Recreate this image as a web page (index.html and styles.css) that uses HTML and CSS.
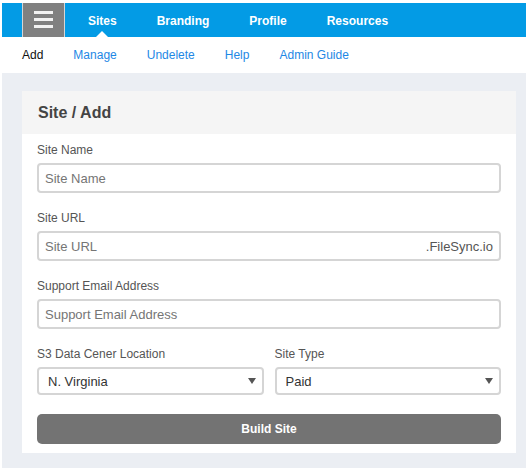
FILE: index.html
```html
<!DOCTYPE html>
<html>
<head>
<meta charset="utf-8">
<link rel="stylesheet" href="styles.css">
</head>
<body>
<div class="app">
  <nav class="topnav">
    <div class="menu-btn">
      <svg width="19" height="17" viewBox="0 0 19 17"><rect x="0" y="0" width="19" height="3" fill="#f2f2f2"/><rect x="0" y="7" width="19" height="3" fill="#f2f2f2"/><rect x="0" y="14" width="19" height="3" fill="#f2f2f2"/></svg>
    </div>
    <div class="nav-items">
      <a class="nav-item active">Sites</a>
      <a class="nav-item">Branding</a>
      <a class="nav-item">Profile</a>
      <a class="nav-item">Resources</a>
    </div>
  </nav>
  <div class="subnav">
    <a class="sub-item current">Add</a>
    <a class="sub-item">Manage</a>
    <a class="sub-item">Undelete</a>
    <a class="sub-item">Help</a>
    <a class="sub-item">Admin Guide</a>
  </div>
  <main class="main">
    <section class="card">
      <header class="card-header">Site / Add</header>
      <div class="card-body">
        <div class="field">
          <label class="label">Site Name</label>
          <input class="input" type="text" placeholder="Site Name">
        </div>
        <div class="field">
          <label class="label">Site URL</label>
          <div class="input-group">
            <input class="input-inner" type="text" placeholder="Site URL">
            <span class="suffix">.FileSync.io</span>
          </div>
        </div>
        <div class="field">
          <label class="label">Support Email Address</label>
          <input class="input" type="text" placeholder="Support Email Address">
        </div>
        <div class="row">
          <div class="col">
            <label class="label">S3 Data Cener Location</label>
            <div class="select-wrap">
              <select class="select"><option>N. Virginia</option></select>
              <span class="arrow"></span>
            </div>
          </div>
          <div class="col">
            <label class="label">Site Type</label>
            <div class="select-wrap">
              <select class="select"><option>Paid</option></select>
              <span class="arrow"></span>
            </div>
          </div>
        </div>
        <button class="btn">Build Site</button>
      </div>
    </section>
  </main>
</div>
</body>
</html>
```
FILE: styles.css
```css
* { box-sizing: border-box; }
html, body { background: #fff; }
body {
  margin: 3px 2px 2px 2px;
  font-family: "Liberation Sans", Arial, sans-serif;
}
.app { display: flex; flex-direction: column; height: 465px; }
.topnav {
  display: flex;
  height: 34px;
  background: #039be5;
  padding-left: 20px;
}
.menu-btn {
  width: 43px;
  background: #808080;
  border-left: 1px solid #d6d6d6;
  border-right: 1px solid #d6d6d6;
  display: flex;
  align-items: center;
  justify-content: center;
}
.menu-btn svg { display: block; margin-top: -1px; }
.nav-items { display: flex; margin-left: 3px; }
.nav-item {
  position: relative;
  padding: 1px 20px 0;
  line-height: 34px;
  height: 34px;
  font-size: 12px;
  font-weight: bold;
  color: #fff;
}
.nav-item.active::after {
  content: "";
  position: absolute;
  left: 50%;
  bottom: 0;
  margin-left: -6px;
  border-left: 6px solid transparent;
  border-right: 6px solid transparent;
  border-bottom: 6px solid #fff;
}
.subnav {
  display: flex;
  align-items: center;
  gap: 30px;
  height: 36px;
  padding-left: 20px;
  font-size: 12px;
}
.sub-item { color: #1e88e5; }
.sub-item.current { color: #111; }
.main {
  flex: 1;
  background: #ebeef3;
  padding: 18px 10px 15px 20px;
}
.card { background: #fff; }
.card-header {
  height: 43px;
  display: flex;
  align-items: center;
  padding: 0 16px;
  background: #f5f5f5;
  font-size: 16px;
  font-weight: bold;
  color: #444;
}
.card-body { padding: 8px 15px 9px; }
.field { margin-bottom: 17px; }
.label {
  display: block;
  font-size: 12px;
  line-height: 17px;
  margin-bottom: 4px;
  color: #555;
}
.input, .input-group {
  display: block;
  width: 100%;
  height: 30px;
  border: 2px solid #d5d5d5;
  border-radius: 4px;
  font: 13px "Liberation Sans", Arial, sans-serif;
  color: #333;
  background: #fff;
}
.input { padding: 0 6px; outline: none; }
.input-group { display: flex; align-items: center; }
.input-inner {
  flex: 1;
  min-width: 0;
  height: 100%;
  border: 0;
  outline: none;
  padding: 0 6px;
  background: transparent;
  font: 13px "Liberation Sans", Arial, sans-serif;
}
.suffix { padding-right: 6px; color: #555; font-size: 13px; }
::placeholder { color: #757575; opacity: 1; }
.row { display: flex; gap: 11px; margin-bottom: 19px; }
.col { flex: 1; }
.select-wrap { position: relative; }
.select {
  display: block;
  width: 100%;
  height: 28px;
  appearance: none;
  -webkit-appearance: none;
  border: 2px solid #d5d5d5;
  border-radius: 4px;
  padding: 0 9px;
  background: #fff;
  font: 13px "Liberation Sans", Arial, sans-serif;
  color: #333;
  outline: none;
}
.arrow {
  position: absolute;
  right: 8px;
  top: 11px;
  border-left: 4px solid transparent;
  border-right: 4px solid transparent;
  border-top: 6px solid #555;
}
.btn {
  display: block;
  width: 100%;
  height: 30px;
  border: 0;
  border-radius: 5px;
  background: #737373;
  color: #fff;
  font: bold 12px "Liberation Sans", Arial, sans-serif;
}
```
